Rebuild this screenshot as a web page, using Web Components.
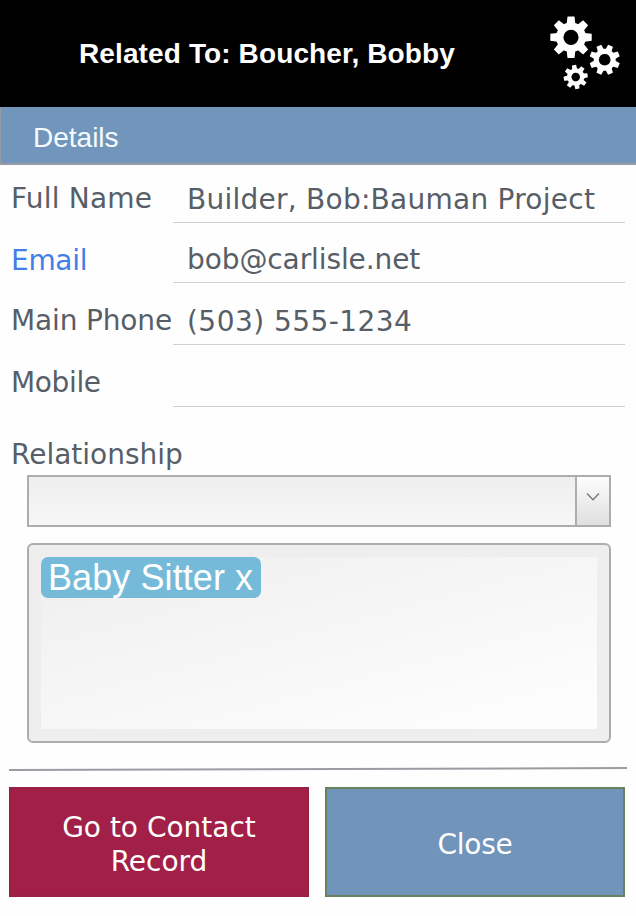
<!DOCTYPE html>
<html lang="en">
<head>
<meta charset="utf-8">
<title>Related To</title>
<style>
	body {
		margin: 0;
		background: #fefefe;
	}
</style>
</head>
<body>
<related-contact></related-contact>

<script>
class GearsIcon extends HTMLElement {
	constructor() {
		super();
		this.attachShadow({ mode: "open" });
		this.shadowRoot.innerHTML = `
			<style>
				:host { display: block; width: 76px; height: 78px; }
				svg { display: block; }
			</style>
			<svg width="76" height="78" viewBox="546 14 76 78" fill="#fff">
				${this.gear(571, 37.3, 20.7, 7.6, 0)}
				${this.gear(604.7, 59.7, 15.2, 5.8, 22.5)}
				${this.gear(575.7, 77, 12, 4.3, -8)}
			</svg>
		`;
	}

	// eight-toothed wheel: a ring plus one tooth every 45 degrees
	gear(cx, cy, r, hole, turn) {
		const body = r * 0.72;
		let teeth = "";
		for (let i = 0; i < 8; i++) {
			teeth += `<polygon transform="rotate(${i * 45})" points="${-r * 0.17},${-r} ${r * 0.17},${-r} ${r * 0.21},${-body * 0.9} ${-r * 0.21},${-body * 0.9}"/>`;
		}
		return `
			<g transform="translate(${cx} ${cy}) rotate(${turn})">
				<circle r="${(body + hole) / 2}" fill="none" stroke="#fff" stroke-width="${body - hole}"/>
				${teeth}
			</g>
		`;
	}
}

class TitleBar extends HTMLElement {
	constructor() {
		super();
		this.attachShadow({ mode: "open" });
		this.shadowRoot.innerHTML = `
			<style>
				:host {
					display: flex;
					justify-content: space-between;
					height: 107px;
					box-sizing: border-box;
					padding: 14px 14px 0 79px;
					background: #000;
					color: #fff;
					font: bold 28px/32px "Liberation Sans", Arial, sans-serif;
					letter-spacing: 0.12px;
				}
				.title { padding-top: 24px; white-space: nowrap; }
			</style>
			<div class="title"><slot></slot></div>
			<gears-icon></gears-icon>
		`;
	}
}

class SectionBar extends HTMLElement {
	constructor() {
		super();
		this.attachShadow({ mode: "open" });
		this.shadowRoot.innerHTML = `
			<style>
				:host {
					display: block;
					height: 58px;
					box-sizing: border-box;
					padding: 15px 0 0 32px;
					border-left: 1px solid #939aa5;
					border-bottom: 2px solid #969ca6;
					background: #7195bb;
					color: #f4fcff;
					font: 28px/32px "Liberation Sans", Arial, sans-serif;
				}
			</style>
			<slot></slot>
		`;
	}
}

class FieldRow extends HTMLElement {
	constructor() {
		super();
		this.attachShadow({ mode: "open" });
		this.shadowRoot.innerHTML = `
			<style>
				:host {
					display: flex;
					height: var(--row, 62px);
					line-height: 34px;
					white-space: nowrap;
				}
				.label {
					width: 173px;
					box-sizing: border-box;
					padding: var(--label-top, 21px) 0 0 11px;
					color: var(--label-color, #575e67);
					letter-spacing: var(--label-spacing, 0);
				}
				.value {
					width: 452px;
					box-sizing: border-box;
					padding: var(--value-top, 21px) 0 0 14px;
					border-bottom: 1px solid #d0d0d2;
					letter-spacing: var(--value-spacing, 0);
				}
			</style>
			<div class="label"><slot name="label"></slot></div>
			<div class="value"><slot></slot></div>
		`;
	}
}

class SelectBox extends HTMLElement {
	constructor() {
		super();
		this.attachShadow({ mode: "open" });
		this.shadowRoot.innerHTML = `
			<style>
				:host {
					display: flex;
					height: 52px;
					box-sizing: border-box;
					border: 2px solid #adadad;
				}
				.text { flex: 1; background: linear-gradient(#eee, #f7f7f7); }
				.arrow {
					width: 34px;
					box-sizing: border-box;
					border-left: 2px solid #adadad;
					background: linear-gradient(#fdfdfd, #dfdfdf);
				}
				svg { display: block; }
			</style>
			<div class="text"></div>
			<div class="arrow">
				<svg width="32" height="48" viewBox="0 0 32 48">
					<path d="M10 16.5 L16 22.7 L22 16.5" fill="none" stroke="#777" stroke-width="1.3"/>
				</svg>
			</div>
		`;
	}
}

class TagBox extends HTMLElement {
	constructor() {
		super();
		this.attachShadow({ mode: "open" });
		this.shadowRoot.innerHTML = `
			<style>
				:host {
					display: block;
					height: 200px;
					box-sizing: border-box;
					padding: 12px;
					border: 2px solid #adadad;
					border-radius: 6px;
					background: #eee;
				}
				.area {
					height: 172px;
					background: linear-gradient(165deg, #f0f0f0 10%, #fdfdfd 90%);
				}
			</style>
			<div class="area"><slot></slot></div>
		`;
	}
}

class TagChip extends HTMLElement {
	constructor() {
		super();
		this.attachShadow({ mode: "open" });
		this.shadowRoot.innerHTML = `
			<style>
				:host {
					display: block;
					width: 220px;
					height: 41px;
					box-sizing: border-box;
					padding-left: 7px;
					border-radius: 7px;
					background: #75bbd9;
					color: #fff;
					font: 36px/42px "Liberation Sans", Arial, sans-serif;
					letter-spacing: 0.08px;
					white-space: nowrap;
				}
			</style>
			<slot></slot>
		`;
	}
}

class ActionButton extends HTMLElement {
	constructor() {
		super();
		this.attachShadow({ mode: "open" });
		this.shadowRoot.innerHTML = `
			<style>
				:host {
					display: flex;
					align-items: center;
					justify-content: center;
					width: 300px;
					height: 110px;
					box-sizing: border-box;
					padding: 6px 40px 0;
					border: 2px solid var(--edge);
					background: var(--fill);
					color: #fff;
					line-height: 34px;
					text-align: center;
				}
			</style>
			<span><slot></slot></span>
		`;
	}
}

class RelatedContact extends HTMLElement {
	constructor() {
		super();
		this.attachShadow({ mode: "open" });
		this.render();
	}

	render() {
		this.shadowRoot.innerHTML = `
			<style>
				:host {
					display: block;
					width: 636px;
					height: 916px;
					overflow: hidden;
					color: #575e67;
					font: 28px/34px "DejaVu Sans", Verdana, sans-serif;
				}
				.full-name {
					--row: 58px;
					--label-top: 17px;
					--value-top: 18px;
					--label-spacing: 0.2px;
					--value-spacing: 0.25px;
				}
				.email {
					--row: 60px;
					--value-top: 20px;
					--label-color: #427ee6;
					--label-spacing: -0.3px;
					--value-spacing: -0.1px;
				}
				.phone { --value-top: 22px; --label-spacing: -0.15px; --value-spacing: 0.45px; }
				.mobile { --label-spacing: -0.35px; }
				.caption { padding: 31px 0 3px 11px; }
				.relationship {
					display: flex;
					flex-direction: column;
					gap: 16px;
					width: 584px;
					margin-left: 27px;
				}
				.rule { display: block; margin: 24px 0 0 9px; }
				.actions {
					display: flex;
					gap: 16px;
					padding: 16px 0 0 9px;
				}
				.go { --fill: #a22047; --edge: #962145; }
				.close { --fill: #7094ba; --edge: #6b805d; letter-spacing: -0.3px; }
			</style>

			<title-bar>Related To: Boucher, Bobby</title-bar>
			<section-bar>Details</section-bar>

			<field-row class="full-name"><span slot="label">Full Name</span>Builder, Bob:Bauman Project</field-row>
			<field-row class="email"><span slot="label">Email</span>bob@carlisle.net</field-row>
			<field-row class="phone"><span slot="label">Main Phone</span>(503) 555-1234</field-row>
			<field-row class="mobile"><span slot="label">Mobile</span></field-row>

			<div class="caption">Relationship</div>
			<div class="relationship">
				<select-box></select-box>
				<tag-box><tag-chip>Baby Sitter x</tag-chip></tag-box>
			</div>

			<svg class="rule" width="618" height="4" viewBox="0 0 618 4">
				<line x1="0" y1="3" x2="618" y2="1" stroke="#999da2" stroke-width="2"/>
			</svg>

			<div class="actions">
				<action-button class="go">Go to Contact Record</action-button>
				<action-button class="close">Close</action-button>
			</div>
		`;
	}
}

customElements.define("gears-icon", GearsIcon);
customElements.define("title-bar", TitleBar);
customElements.define("section-bar", SectionBar);
customElements.define("field-row", FieldRow);
customElements.define("select-box", SelectBox);
customElements.define("tag-box", TagBox);
customElements.define("tag-chip", TagChip);
customElements.define("action-button", ActionButton);
customElements.define("related-contact", RelatedContact);
</script>
</body>
</html>
